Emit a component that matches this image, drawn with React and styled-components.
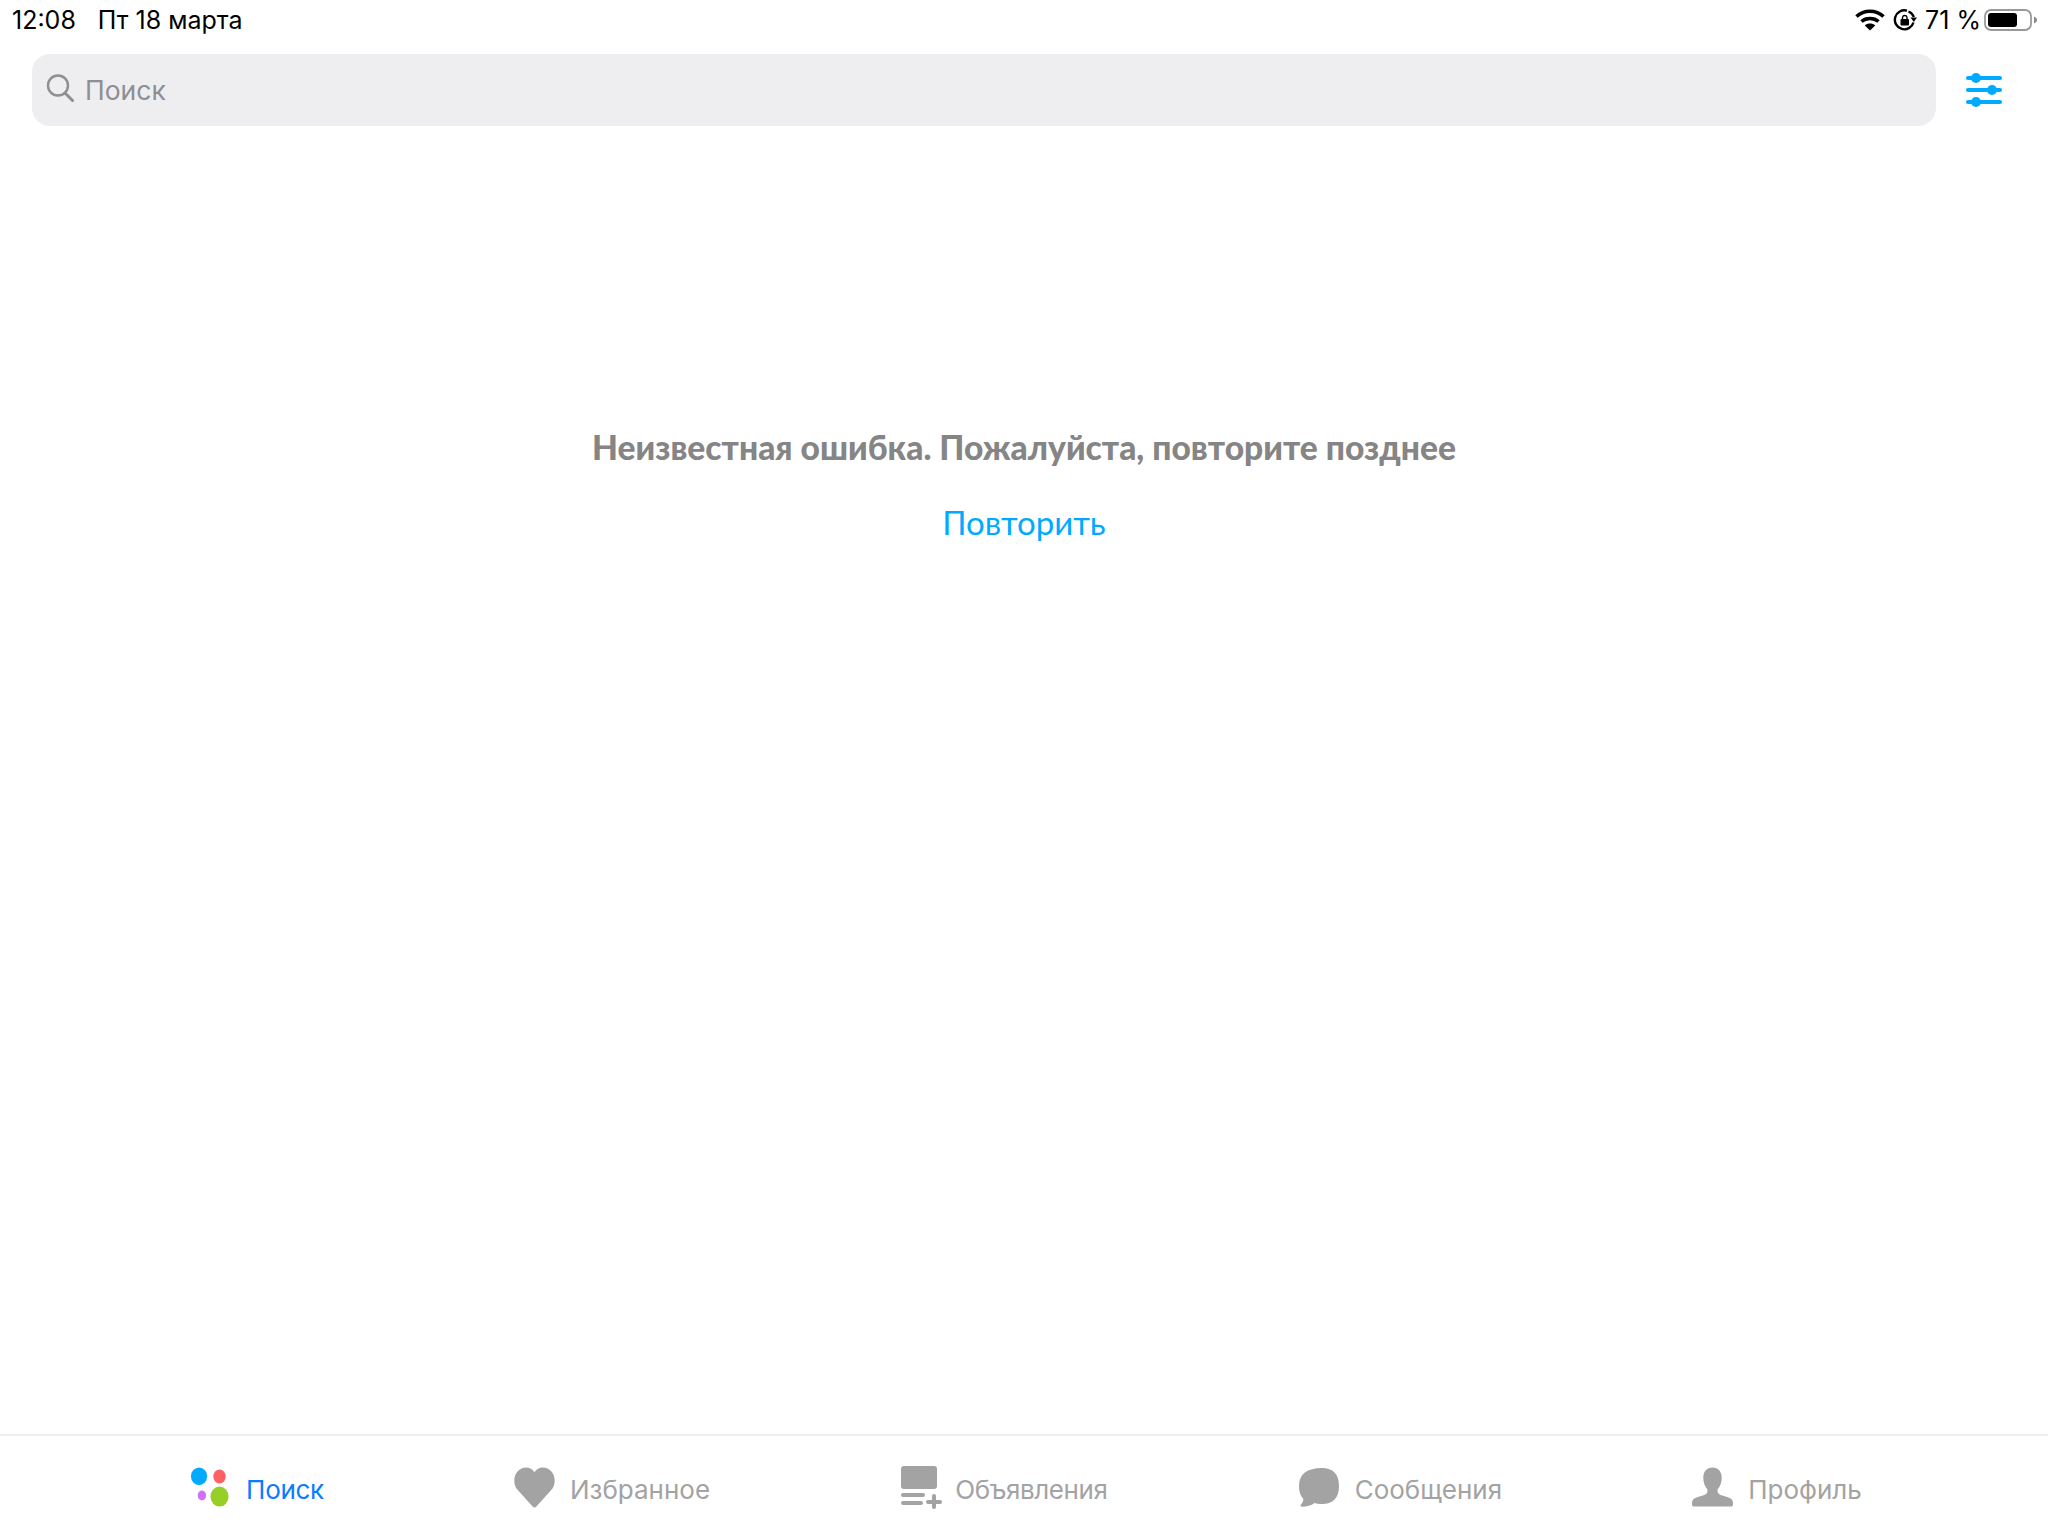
import React from 'react';
import styled, { createGlobalStyle } from 'styled-components';

const GlobalStyle = createGlobalStyle`
  html, body {
    margin: 0;
    padding: 0;
    background: #fff;
  }
  body {
    font-family: "Inter", "Liberation Sans", sans-serif;
  }
`;

const Page = styled.div`
  width: 2048px;
  height: 1536px;
  display: flex;
  flex-direction: column;
  background: #fff;
  overflow: hidden;
`;

const StatusBar = styled.div`
  height: 40px;
  padding: 0 10px 0 12px;
  display: flex;
  align-items: center;
  justify-content: space-between;
  font-family: "Inter", "Liberation Sans", sans-serif;
  font-size: 25px;
  color: #000;
`;

const StatusLeft = styled.div`
  display: flex;
  gap: 22px;
`;

const StatusRight = styled.div`
  display: flex;
  align-items: center;
`;

const LockSpacer = styled.span`
  width: 8px;
`;

const Percent = styled.span`
  margin: 0 3px 0 8px;
`;

const SearchRow = styled.div`
  height: 72px;
  margin-top: 14px;
  padding-left: 32px;
  display: flex;
  align-items: center;
`;

const SearchField = styled.div`
  flex: 1;
  height: 72px;
  display: flex;
  align-items: center;
  padding-left: 14px;
  gap: 11px;
  background: #eeeef0;
  border-radius: 18px;
  font-family: "Inter", "Liberation Sans", sans-serif;
  font-size: 26.5px;
  color: #8e8e93;

  svg {
    position: relative;
    top: -2px;
  }
`;

const FilterButton = styled.div`
  width: 112px;
  padding-right: 16px;
  box-sizing: border-box;
  display: flex;
  justify-content: center;
`;

const Content = styled.div`
  flex: 1;
  display: flex;
  flex-direction: column;
  align-items: center;
  padding-top: 299px;
`;

const ErrorText = styled.div`
  font-family: "Lato", "Open Sans", sans-serif;
  font-weight: 900;
  font-size: 33.6px;
  line-height: 44px;
  color: #858585;
`;

const RetryLink = styled.div`
  margin-top: 31px;
  font-family: "Lato", "Open Sans", sans-serif;
  font-size: 33px;
  line-height: 44px;
  color: #00aaff;
`;

const TabBar = styled.div`
  height: 102px;
  box-sizing: border-box;
  border-top: 2px solid #eeeeee;
  padding-top: 2px;
  margin-right: -4px;
  display: flex;
  justify-content: space-evenly;
  align-items: center;
`;

const Tab = styled.div`
  display: flex;
  align-items: center;
  gap: ${(props) => props.$gap}px;
  font-family: "Inter", "Roboto", sans-serif;
  font-size: 26px;
  letter-spacing: ${(props) => props.$spacing || 0}px;
  color: ${(props) => (props.$active ? '#0a7cff' : '#a3a3a3')};
`;

const TabLabel = styled.span`
  position: relative;
  top: 2px;
`;

const WifiIcon = () => (
  <svg width="30" height="22" viewBox="0 0 30 22">
    <path d="M1.5 7.5C9 0.5 21 0.5 28.5 7.5" fill="none" stroke="#000" strokeWidth="3.6" />
    <path d="M6.5 12.5C11 8.5 19 8.5 23.5 12.5" fill="none" stroke="#000" strokeWidth="3.6" />
    <path d="M15 21.5L9.8 16.4C12.6 13.8 17.4 13.8 20.2 16.4Z" fill="#000" />
  </svg>
);

const RotationLockIcon = () => (
  <svg width="24" height="24" viewBox="0 0 24 24">
    <path d="M20.5 14.5A9.5 9.5 0 1 1 14 2.7" fill="none" stroke="#000" strokeWidth="2.4" />
    <path d="M15.5 3.5C18 4.5 20 6.5 20.8 9" fill="none" stroke="#000" strokeWidth="2.4" />
    <path d="M17.5 9.5L24 9.5L20.8 14Z" fill="#000" />
    <rect x="7.5" y="11" width="8.5" height="6.5" rx="1" fill="#000" />
    <path d="M9.5 11.5V9.3a2.3 2.3 0 0 1 4.5 0V11.5" fill="none" stroke="#000" strokeWidth="1.4" />
  </svg>
);

const BatteryIcon = () => (
  <svg width="54" height="24" viewBox="0 0 54 24">
    <rect x="1" y="2" width="46" height="20" rx="6" fill="none" stroke="#999" strokeWidth="1.8" />
    <rect x="4" y="5" width="29" height="14" rx="3" fill="#000" />
    <path d="M50 8.5C52 9.2 53 10.5 53 12C53 13.5 52 14.8 50 15.5Z" fill="#8a8a8a" />
  </svg>
);

const SearchIcon = () => (
  <svg width="28" height="30" viewBox="0 0 28 30">
    <circle cx="12" cy="12.5" r="10" fill="none" stroke="#8e8e93" strokeWidth="2.4" />
    <path d="M19 20L26.5 27.5" stroke="#8e8e93" strokeWidth="3" strokeLinecap="round" />
  </svg>
);

const FilterIcon = () => (
  <svg width="38" height="36" viewBox="0 0 38 36" fill="#00aaff">
    <rect x="1" y="4" width="36" height="4" rx="2" />
    <rect x="1" y="16" width="36" height="4" rx="2" />
    <rect x="1" y="28" width="36" height="4" rx="2" />
    <circle cx="11" cy="6" r="5" />
    <circle cx="27" cy="18" r="5" />
    <circle cx="11" cy="30" r="5" />
  </svg>
);

const LogoIcon = () => (
  <svg width="40" height="40" viewBox="0 0 42 42">
    <ellipse cx="9.5" cy="9.7" rx="8.5" ry="9.2" fill="#00aaff" />
    <ellipse cx="31" cy="10" rx="6.5" ry="7.4" fill="#ff6163" />
    <ellipse cx="12.5" cy="30" rx="4.4" ry="5.2" fill="#d071f9" />
    <ellipse cx="31" cy="31" rx="9.5" ry="10.6" fill="#97cf26" />
  </svg>
);

const HeartIcon = () => (
  <svg width="41" height="41" viewBox="0 0 36 36.5">
    <path
      d="M18 36C17 36 16.4 35.2 15.5 34.2L3.5 21C1.2 18.5 0 15.8 0 12.2C0 5.4 4.7 0.5 10.6 0.5C13.8 0.5 16.4 2.2 18 4.6C19.6 2.2 22.2 0.5 25.4 0.5C31.3 0.5 36 5.4 36 12.2C36 15.8 34.8 18.5 32.5 21L20.5 34.2C19.6 35.2 19 36 18 36Z"
      fill="#a3a3a3"
    />
  </svg>
);

const ListAddIcon = () => (
  <svg width="42" height="44" viewBox="0 0 42 44" fill="#a3a3a3">
    <rect x="1" y="1" width="36" height="23" rx="3" />
    <rect x="1" y="28" width="24" height="4" rx="2" />
    <rect x="1" y="36" width="22" height="4" rx="2" />
    <rect x="26" y="35" width="16" height="4" rx="2" />
    <rect x="32" y="29" width="4" height="15" rx="2" />
  </svg>
);

const BubbleIcon = () => (
  <svg width="42" height="42" viewBox="0 0 42 40">
    <path
      d="M24 1C35 1 41 7 41 19C41 31 35 37 24 37C21 37 18.5 36.7 16.5 36C13 38.5 9 39.8 4.5 39.8C2.5 39.8 2 38.6 3 37.5C4.5 35.8 5.3 34 5.4 32C2.4 29 1 24.8 1 19C1 7 9 1 24 1Z"
      fill="#a3a3a3"
    />
  </svg>
);

const PersonIcon = () => (
  <svg width="41" height="40" viewBox="0 0 40 38">
    <path
      d="M20 0C25.5 0 29 4 29 10C29 14.5 27.5 18.5 25 21.2V23.5C25 25 26 26 28 26.7L35 29C38.5 30.2 40 32 40 34.5V36C40 37.2 39.2 38 38 38H2C0.8 38 0 37.2 0 36V34.5C0 32 1.5 30.2 5 29L12 26.7C14 26 15 25 15 23.5V21.2C12.5 18.5 11 14.5 11 10C11 4 14.5 0 20 0Z"
      fill="#a3a3a3"
    />
  </svg>
);

const tabs = [
  { label: 'Поиск', Icon: LogoIcon, gap: 16, active: true, spacing: -0.3 },
  { label: 'Избранное', Icon: HeartIcon, gap: 15 },
  { label: 'Объявления', Icon: ListAddIcon, gap: 13, spacing: -0.4 },
  { label: 'Сообщения', Icon: BubbleIcon, gap: 15 },
  { label: 'Профиль', Icon: PersonIcon, gap: 15 },
];

const App = () => (
  <Page>
    <GlobalStyle />
    <StatusBar>
      <StatusLeft>
        <span>12:08</span>
        <span>Пт 18 марта</span>
      </StatusLeft>
      <StatusRight>
        <WifiIcon />
        <LockSpacer />
        <RotationLockIcon />
        <Percent>71 %</Percent>
        <BatteryIcon />
      </StatusRight>
    </StatusBar>
    <SearchRow>
      <SearchField>
        <SearchIcon />
        <span>Поиск</span>
      </SearchField>
      <FilterButton>
        <FilterIcon />
      </FilterButton>
    </SearchRow>
    <Content>
      <ErrorText>Неизвестная ошибка. Пожалуйста, повторите позднее</ErrorText>
      <RetryLink>Повторить</RetryLink>
    </Content>
    <TabBar>
      {tabs.map(({ label, Icon, gap, active, spacing }) => (
        <Tab key={label} $gap={gap} $active={active} $spacing={spacing}>
          <Icon />
          <TabLabel>{label}</TabLabel>
        </Tab>
      ))}
    </TabBar>
  </Page>
);

export default App;
